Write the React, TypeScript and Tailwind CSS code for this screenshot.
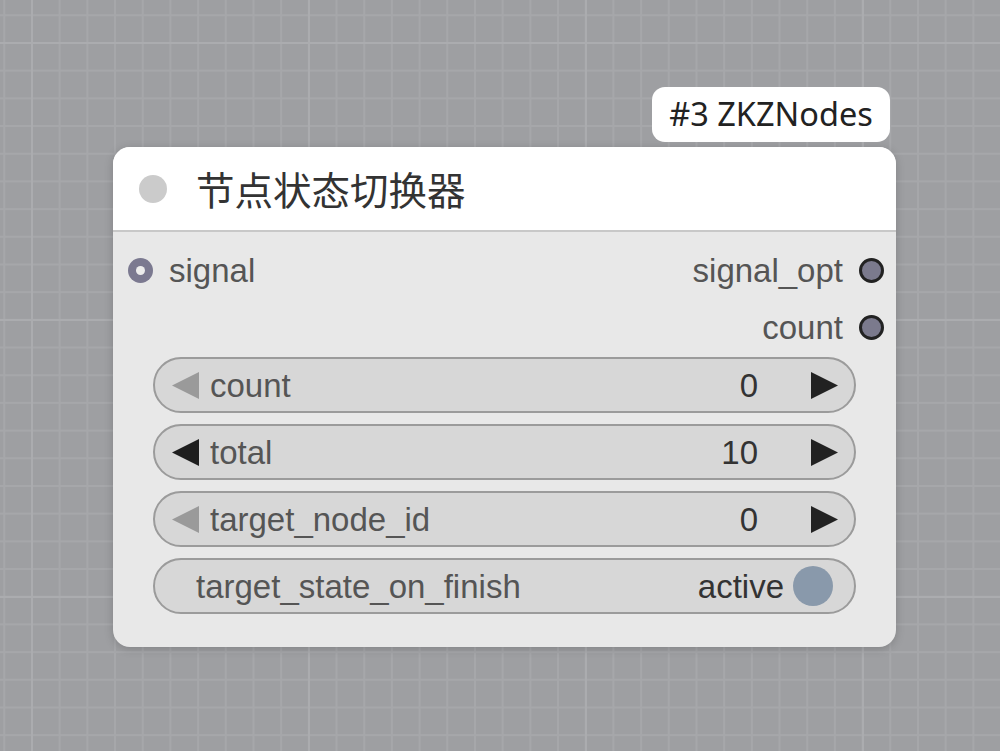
import React from "react";

const LeftArrow = ({ color }: { color: string }) => (
  <svg width="27" height="27" viewBox="0 0 27 27" className="shrink-0">
    <polygon points="27,0 27,27 0,13.5" fill={color} />
  </svg>
);

const RightArrow = () => (
  <svg width="27" height="27" viewBox="0 0 27 27" className="shrink-0">
    <polygon points="0,0 27,13.5 0,27" fill="#222222" />
  </svg>
);

const NumberWidget = ({
  label,
  value,
  leftActive,
}: {
  label: string;
  value: string;
  leftActive: boolean;
}) => (
  <div className="mx-[40px] h-[56px] rounded-full border-2 border-[#9b9b9b] bg-[#d7d7d7] flex items-center pl-[17px] pr-[16px]">
    <LeftArrow color={leftActive ? "#1e1e1e" : "#9a9a9a"} />
    <span className="ml-[11px] flex-1 text-[33px] leading-none text-[#555555]">{label}</span>
    <span className="text-[33px] leading-none text-[#333333]">{value}</span>
    <span className="ml-[53px] flex">
      <RightArrow />
    </span>
  </div>
);

export default function App() {
  return (
    <div
      className="relative w-[1000px] h-[751px] overflow-hidden bg-[#9e9fa2] [background-image:linear-gradient(to_right,#abacaf_2px,transparent_2px),linear-gradient(to_bottom,#abacaf_2px,transparent_2px),linear-gradient(to_right,#a6a7aa_2px,transparent_2px),linear-gradient(to_bottom,#a6a7aa_2px,transparent_2px)] [background-size:277px_277px,277px_277px,27.7px_27.7px,27.7px_27.7px] [background-position:31px_42px,31px_42px,3.3px_14.3px,3.3px_14.3px]"
      style={{ fontFamily: '"Liberation Sans", Arial, sans-serif' }}
    >
      {/* badge */}
      <div
        className="absolute left-[652px] top-[87px] w-[238px] h-[55px] rounded-[13px] bg-white flex items-center justify-center text-[32.5px] text-[#222222]"
        style={{ fontFamily: '"Noto Sans", "Noto Sans CJK SC", sans-serif' }}
      >
        #3 ZKZNodes
      </div>

      {/* node */}
      <div className="absolute left-[113px] top-[147px] w-[783px] h-[500px] rounded-[17px] bg-[#e8e8e8] overflow-hidden shadow-[0_2px_10px_rgba(0,0,0,0.18)] flex flex-col">
        <div className="h-[85px] shrink-0 bg-white border-b-2 border-[#c8c8c8] flex items-center pl-[26px]">
          <div className="w-[28px] h-[28px] rounded-full bg-[#cbcbcb]" />
          <span
            className="ml-[29px] text-[38.5px] leading-none text-[#333333]"
            style={{ fontFamily: '"Noto Sans CJK SC", sans-serif' }}
          >
            节点状态切换器
          </span>
        </div>

        <div className="pt-[10px] flex flex-col">
          <div className="h-[57px] flex items-center justify-between">
            <div className="flex items-center">
              <div className="ml-[15px] w-[25px] h-[25px] rounded-full bg-[#7b7990] flex items-center justify-center">
                <div className="w-[9px] h-[9px] rounded-full bg-[#ececec]" />
              </div>
              <span className="ml-[16px] text-[33px] leading-none text-[#555555]">signal</span>
            </div>
            <div className="flex items-center">
              <span className="text-[33px] leading-none text-[#555555]">signal_opt</span>
              <div className="ml-[16px] mr-[12px] w-[25px] h-[25px] rounded-full bg-[#7b7a8d] border-[3px] border-[#222222]" />
            </div>
          </div>
          <div className="h-[57px] flex items-center justify-end">
            <span className="text-[33px] leading-none text-[#555555]">count</span>
            <div className="ml-[16px] mr-[12px] w-[25px] h-[25px] rounded-full bg-[#7b7a8d] border-[3px] border-[#222222]" />
          </div>

          <div className="mt-[1px] flex flex-col gap-[11px]">
            <NumberWidget label="count" value="0" leftActive={false} />
            <NumberWidget label="total" value="10" leftActive={true} />
            <NumberWidget label="target_node_id" value="0" leftActive={false} />
            <div className="mx-[40px] h-[56px] rounded-full border-2 border-[#9b9b9b] bg-[#d7d7d7] flex items-center pl-[41px] pr-[21px]">
              <span className="flex-1 text-[33px] leading-none text-[#555555]">target_state_on_finish</span>
              <span className="text-[33px] leading-none text-[#333333]">active</span>
              <div className="ml-[9px] w-[40px] h-[40px] rounded-full bg-[#8999ab]" />
            </div>
          </div>
        </div>
      </div>
    </div>
  );
}
